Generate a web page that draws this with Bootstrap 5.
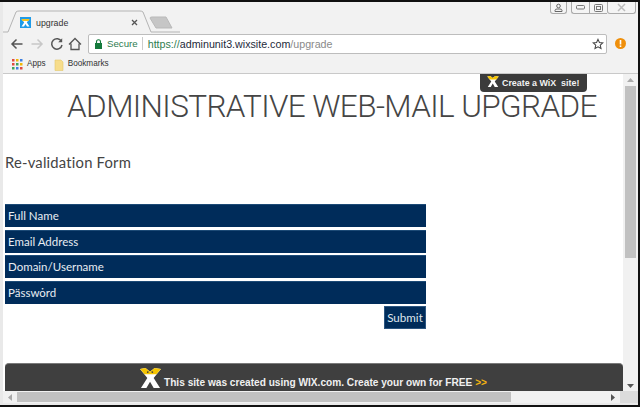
<!doctype html>
<html lang="en"><head><meta charset="utf-8"><title>upgrade</title>
<link href="https://cdn.jsdelivr.net/npm/bootstrap@5.3.0/dist/css/bootstrap.min.css" rel="stylesheet">
<style>
html,body{height:100%;margin:0;overflow:hidden;background:#111}
body{font-family:"Liberation Sans",Arial,sans-serif}
.win{width:638px;height:403px;margin-top:2px;background:#f2f2f2;border-left:3px solid #e9e9e9;box-shadow:-1px 0 0 #333}
.tabstrip{height:30px;position:relative;flex:none}
.tabshape{position:absolute;left:-3px;top:-2px;width:180px;height:34px}
.tabtext{font-size:8.8px;color:#333;position:absolute;left:33px;top:15px;line-height:12px}
.favi{position:absolute;left:17px;top:15px;width:14px;height:14px}
.tabx{position:absolute;left:125px;top:14px;width:14px;height:14px}
.winbtns{position:absolute;right:2px;top:0;height:12px}
.wb{height:12px;border:1px solid #aaa;border-top:0;border-radius:0 0 3px 3px;background:#f4f4f4;display:flex;align-items:center;justify-content:center}
.wb svg{display:block}
.wb1{width:17px;margin-right:4px}.wb2{width:18px;border-right:0;border-radius:0 0 0 3px}.wb3{width:18px;border-right:0;border-radius:0}.wb4{width:29px}
.toolbar{height:23px;flex:none;padding-right:12px;padding-left:6px;position:relative;gap:4px}
.navicon{width:16px;height:16px;display:block;flex:none}
.omni{flex:1;height:20px;background:#fff;border:1px solid #bdbdbd;border-radius:2px;margin-left:1px;font-size:10.7px;line-height:18px;min-width:0;padding-left:5px}
.sec{color:#2f7d4f;font-size:9.7px}.sep{width:1px;height:13px;background:#ccc;margin:0 5px 0 4px}
.host{color:#1d2a3a}.pre{color:#2f7d4f}.pth{color:#8a8a8a}
.bmarks{height:19px;flex:none;border-bottom:1px solid #c9c9c9;font-size:8.2px;color:#333;padding-left:9px;padding-top:1px}
.viewport{flex:1;min-height:0;background:#fff;position:relative}
.pagearea{flex:1;min-width:0;position:relative;overflow:hidden}
.ttl{font-family:Roboto,sans-serif;font-weight:300;font-size:31.5px;line-height:38px;color:#454545;margin:0;padding:14px 0 0 64px;white-space:nowrap;letter-spacing:-.6px}
.sub{font-family:Lato,sans-serif;font-size:14.8px;line-height:20px;color:#444;margin:0;padding:26px 0 0 2px;font-weight:400;letter-spacing:.2px}
.frm{width:421px;margin:32px 0 0 2px;display:flex;flex-direction:column}
.fld{height:23px;background:#002c5a;border:0;border-top:1px solid #1c4a76;border-radius:0;color:#e8edf2;font-family:Lato,sans-serif;font-size:11.5px;line-height:22px;padding:0 3px;margin-bottom:2.6px}
.sbm{align-self:flex-end;height:23px;width:42px;background:#002c5a;color:#dfe6ee;font-size:11.6px;font-family:Lato,sans-serif;border:1px solid #2b5580;padding:0;border-radius:0}
.tag{position:absolute;left:477px;top:0;width:107px;height:18px;background:#3b3b3b;border-radius:0 0 4px 4px;color:#f2f2f2;font-size:8.9px;font-weight:700;line-height:18px;padding-left:22px;white-space:nowrap}
.tag svg{position:absolute;left:7px;top:2px;width:12px;height:11px}
.foot{position:absolute;left:2px;right:0;bottom:0;height:28px;background:#3f3f3f;border-top:1px solid #7a7a7a;border-radius:4px 4px 0 0;color:#f0f0f0;font-size:10.15px;font-weight:700;line-height:12px;white-space:nowrap}
.foot span{position:absolute;left:159px;top:13px}
.foot b{color:#f2b311}
.foot svg{position:absolute;left:134px;top:4px;width:23px;height:20px}
.vbar{width:15px;flex:none;background:#f1f1f1;display:flex;flex-direction:column;align-items:center}
.vthumb{width:11px;height:172px;background:#c1c1c1;margin-top:1px}
.arr{flex:none;height:11px;display:flex;align-items:center;justify-content:center}
.hrow{height:12px;flex:none;background:#f1f1f1}
.hthumb{width:494px;height:10px;background:#c1c1c1}
.bedge{height:2px;flex:none;background:#e9e9e9}
</style></head><body>
<div class="win d-flex flex-column">
 <div class="tabstrip">
  <svg class="tabshape" viewBox="0 0 180 34"><path d="M3 33H8L16 13Q17 12 19 12H140Q142 12 143 13L151 33H180" transform="translate(0 -1)" fill="#f2f2f2" stroke="#b4b4b4"/><path d="M150 18Q150 17 152 17H166L172 28H156Z" fill="#c6c6c6" stroke="#b9b9b9"/></svg>
  <svg class="favi" viewBox="0 0 14 14"><rect width="11" height="11" fill="#1f9be8"/><path d="M1.500 2 4 2 5.500 4 7 2 9.500 2 6.800 5.500 9.500 9.500 7 9.500 5.500 7 4 9.500 1.500 9.500 4.200 5.500Z" fill="#fff"/><path d="M1.500 2H9.500L8.500 4H2.500Z" fill="#f6c21c"/></svg>
  <span class="tabtext">upgrade</span>
  <svg class="tabx" viewBox="0 0 14 14"><path d="M4 4 9 9M9 4 4 9" stroke="#555" stroke-width="1.300"/></svg>
  <div class="winbtns d-flex">
   <div class="wb wb1"><svg width="9" height="9" viewBox="0 0 9 9" fill="none" stroke="#666"><circle cx="4.500" cy="3" r="1.800"/><path d="M1 8.500V7.500Q1 6 3 6H6Q8 6 8 7.500V8.500Z"/></svg></div>
   <div class="wb wb2"><svg width="9" height="5" viewBox="0 0 9 5"><rect x=".5" y=".5" width="8" height="3.500" rx="1" fill="none" stroke="#777"/></svg></div>
   <div class="wb wb3"><svg width="9" height="8" viewBox="0 0 9 8" fill="none" stroke="#777"><rect x=".5" y=".5" width="8" height="7" rx="1"/><rect x="2.500" y="2.500" width="4" height="3" /></svg></div>
   <div class="wb wb4"><svg width="9" height="9" viewBox="0 0 9 9" fill="none" stroke="#bbb" stroke-width="1.500"><path d="M1 1 8 8M8 1 1 8"/></svg></div>
  </div>
 </div>
 <div class="toolbar d-flex align-items-center">
  <svg class="navicon" viewBox="0 0 16 16" fill="none" stroke="#555" stroke-width="1.500"><path d="M13.500 8H3M7.500 3.500 3 8l4.500 4.500"/></svg>
  <svg class="navicon" viewBox="0 0 16 16" fill="none" stroke="#c8c8c8" stroke-width="1.500"><path d="M2.500 8H13M8.500 3.500 13 8l-4.500 4.500"/></svg>
  <svg class="navicon" viewBox="0 0 16 16" fill="none" stroke="#555" stroke-width="1.500"><path d="M12.500 5.500A5.200 5.200 0 1 0 13 9"/><path d="M13.200 2.200v4h-4z" fill="#555" stroke="none"/></svg>
  <svg class="navicon" style="margin-left:-2px" viewBox="0 0 16 16" fill="none" stroke="#555" stroke-width="1.300"><path d="M2 8.500 8 2.500l6 6M4 7.500V13.500H12V7.500"/></svg>
  <div class="omni d-flex align-items-center">
   <svg width="9" height="10" viewBox="0 0 9 10" class="flex-none" style="margin-right:4px"><rect x="1" y="4" width="7" height="6" fill="#157a3c"/><path d="M2.500 4V2.800a2 2 0 0 1 4 0V4" fill="none" stroke="#157a3c" stroke-width="1.100"/></svg>
   <span class="sec">Secure</span><span class="sep"></span><span><span class="pre">https://</span><span class="host">adminunit3.wixsite.com</span><span class="pth">/upgrade</span></span>
   <svg class="ms-auto" style="margin-right:2px" width="12" height="12" viewBox="0 0 16 16" fill="none" stroke="#444" stroke-width="1.400"><path d="M8 1.800 9.900 6l4.500.5-3.400 3 1 4.500L8 11.700 4 14l1-4.500-3.400-3L6.100 6Z"/></svg>
  </div>
  <svg style="margin-left:4px" width="11" height="11" viewBox="0 0 11 11"><circle cx="5.500" cy="5.500" r="5.500" fill="#ef8f0b"/><rect x="4.700" y="2" width="1.600" height="4.500" fill="#fff"/><rect x="4.700" y="7.400" width="1.600" height="1.600" fill="#fff"/></svg>
 </div>
 <div class="bmarks d-flex align-items-center">
  <svg width="11" height="11" viewBox="0 0 11 11"><g><rect width="2.500" height="2.500" fill="#e04a3f"/><rect x="4" width="2.500" height="2.500" fill="#f2b705"/><rect x="8" width="2.500" height="2.500" fill="#3d7fe0"/><rect y="4" width="2.500" height="2.500" fill="#e04a3f"/><rect x="4" y="4" width="2.500" height="2.500" fill="#3fa35b"/><rect x="8" y="4" width="2.500" height="2.500" fill="#f2b705"/><rect y="8" width="2.500" height="2.500" fill="#3fa35b"/><rect x="4" y="8" width="2.500" height="2.500" fill="#3d7fe0"/><rect x="8" y="8" width="2.500" height="2.500" fill="#e04a3f"/></g></svg>
  <span class="ms-1">Apps</span>
  <svg width="10" height="12" viewBox="0 0 10 12" class="ms-2 ps-0"><path d="M1 1H7L9 3V11.500H1Z" fill="#f7dd8b" stroke="#e3c86c" stroke-width=".6"/></svg>
  <span class="ms-1">Bookmarks</span>
 </div>
 <div class="viewport d-flex flex-column">
  <div class="d-flex flex-grow-1" style="min-height:0">
   <div class="pagearea">
    <h1 class="ttl">ADMINISTRATIVE WEB-MAIL UPGRADE</h1>
    <h2 class="sub">Re-validation Form</h2>
    <form class="frm">
     <div class="fld">Full Name</div>
     <div class="fld">Email Address</div>
     <div class="fld">Domain/Username</div>
     <div class="fld">Pässwȯrd</div>
     <button type="button" class="sbm">Submit</button>
    </form>
    <div class="tag"><svg viewBox="0 0 23 22"><path d="M0 1 6 0 11 4 16 0 23 1 15 11 22 22H15L11 15 7 22H1L8 11Z" fill="#fff"/><path d="M0 1 6 0 11 4 16 0 23 1 18 7H5Z" fill="#f5c400"/></svg>Create a WiX&nbsp; site!</div>
    <div class="foot"><svg viewBox="0 0 23 22"><path d="M0 1 6 0 11 4 16 0 23 1 15 11 22 22H15L11 15 7 22H1L8 11Z" fill="#fff"/><path d="M0 1 6 0 11 4 16 0 23 1 18 7H5Z" fill="#f5c400"/><circle cx="8.500" cy="4.500" r="1" fill="#3f3f3f"/><circle cx="13.500" cy="4.500" r="1" fill="#3f3f3f"/></svg><span>This site was created using WIX.com. Create your own for FREE <b>&gt;&gt;</b></span></div>
   </div>
   <div class="vbar">
    <div class="arr"><svg width="7" height="4" viewBox="0 0 7 4"><path d="M3.500 0 7 4H0Z" fill="#aaa"/></svg></div>
    <div class="vthumb"></div>
    <div class="arr mt-auto"><svg width="7" height="4" viewBox="0 0 7 4"><path d="M0 0H7L3.500 4Z" fill="#555"/></svg></div>
   </div>
  </div>
  <div class="hrow d-flex align-items-center">
   <div class="arr" style="width:14px"><svg width="4" height="7" viewBox="0 0 4 7"><path d="M4 0V7L0 3.500Z" fill="#aaa"/></svg></div>
   <div class="hthumb"></div>
   <div class="arr ms-auto" style="width:15px"><svg width="4" height="7" viewBox="0 0 4 7"><path d="M0 0V7L4 3.500Z" fill="#555"/></svg></div>
   <div style="width:18px;height:12px;background:#dcdcdc"></div>
  </div>
  <div class="bedge"></div>
 </div>
</div>
<script src="https://cdn.jsdelivr.net/npm/bootstrap@5.3.0/dist/js/bootstrap.bundle.min.js"></script>
</body></html>
